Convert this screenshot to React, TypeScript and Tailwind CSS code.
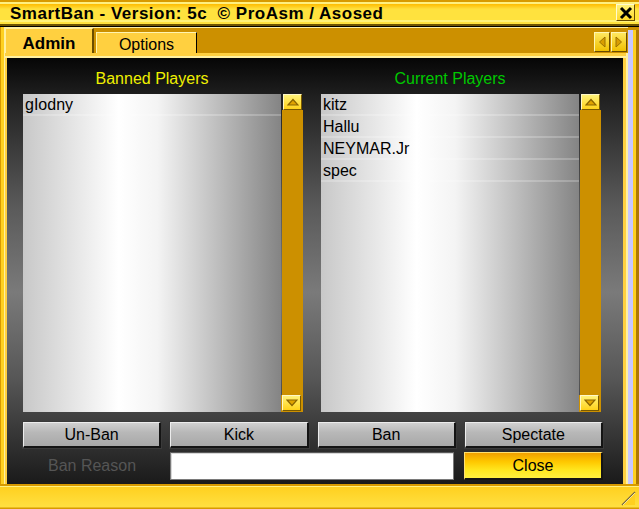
import React from 'react';

const FONT = "font-['Liberation_Sans',Arial,sans-serif]";

function ScrollButton({ dir }: { dir: 'up' | 'down' }) {
  return (
    <div className="h-[16px] w-[19px] flex items-center justify-center bg-[linear-gradient(to_bottom,#fff27a,#ffd21a)] border-t border-l border-[#fff8c8] border-r border-b border-r-[#7a5a00] border-b-[#7a5a00]">
      <svg width="12" height="8" viewBox="0 0 12 8">
        {dir === 'up' ? (
          <polygon points="1,7 6,1.5 11,7" fill="#e0a400" stroke="#8a6400" strokeWidth="1.2" />
        ) : (
          <polygon points="1,1 6,6.5 11,1" fill="#e0a400" stroke="#8a6400" strokeWidth="1.2" />
        )}
      </svg>
    </div>
  );
}

function PlayerList({ title, color, items }: { title: string; color: string; items: string[] }) {
  return (
    <div className="w-[280px] flex flex-col">
      <div className={`h-[20px] pt-[2px] w-[258px] flex items-center justify-center text-[16px] ${color}`}>{title}</div>
      <div className="mt-[6px] h-[318px] flex">
        <div className="w-[258px] bg-[linear-gradient(to_right,#c8c8c8_0%,#ffffff_37%,#f4f4f4_52%,#b8b8b8_78%,#848484_100%)]">
          {items.map((p) => (
            <div
              key={p}
              className="h-[22px] pl-[2px] pt-[2px] flex items-center text-[16px] text-black border-b-2 border-[#ffffff38]"
            >
              {p}
            </div>
          ))}
        </div>
        <div className="w-[22px] flex flex-col">
          <div className="h-[16px] pl-[2px]">
            <ScrollButton dir="up" />
          </div>
          <div className="flex-1 ml-[1px] bg-[#cc9000]" />
          <div className="h-[17px] pl-[1px] bg-[#cc9000]">
            <ScrollButton dir="down" />
          </div>
        </div>
      </div>
    </div>
  );
}

function GrayButton({ label }: { label: string }) {
  return (
    <button className="h-[26px] pt-[1px] flex items-center justify-center text-[16px] text-black bg-[linear-gradient(to_bottom,#d0d0d0,#b8b8b8_40%,#a8a8a8)] border-t border-l border-[#ececec] border-r-2 border-b-2 border-r-[#141414] border-b-[#141414] shadow-[0_0_0_1px_#3a3a3a]">
      {label}
    </button>
  );
}

function ArrowButton({ dir }: { dir: 'left' | 'right' }) {
  return (
    <div className="w-[16px] h-[20px] flex items-center justify-center bg-[linear-gradient(to_bottom,#ffe860,#f0c000)] border-t border-l border-[#fff6b0] border-r border-b border-r-[#6a4c00] border-b-[#6a4c00]">
      <svg width="8" height="12" viewBox="0 0 8 12">
        {dir === 'left' ? (
          <polygon points="7,1 1.5,6 7,11" fill="#d89e00" stroke="#9a7000" strokeWidth="1" />
        ) : (
          <polygon points="1,1 6.5,6 1,11" fill="#d89e00" stroke="#9a7000" strokeWidth="1" />
        )}
      </svg>
    </div>
  );
}

export default function App() {
  return (
    <div className={`w-[639px] h-[509px] flex flex-col overflow-hidden bg-[#ffd020] ${FONT}`}>
      {/* Title bar */}
      <div className="h-[27px] shrink-0 flex items-start bg-[linear-gradient(to_bottom,#d89a00_0px,#d89a00_2px,#fff080_2px,#fff080_4px,#ffbc00_4px,#ffd830_8px,#ffe23e_9px,#ffe23e_20px,#fff27a_20px,#fff27a_22px,#ffe23e_22px,#ffe23e_24px,#6e5400_24px,#6e5400_26px,#000_26px)]">
        <div className="pl-[10px] pt-[3px] h-[24px] flex items-center text-[17px] font-bold tracking-[0.5px] text-black whitespace-pre">
          SmartBan - Version: 5c  © ProAsm / Asosed
        </div>
        <div className="ml-auto mr-[4px] mt-[4px] w-[19px] h-[17px] flex items-center justify-center bg-[linear-gradient(to_bottom,#fff27a,#ffd828)] border-t border-l border-[#fffbd0] border-r border-b border-r-[#6a4c00] border-b-[#6a4c00]">
          <svg width="14" height="14" viewBox="0 0 14 14">
            <path d="M2 2 L12 12 M12 2 L2 12" stroke="#000" strokeWidth="3" />
          </svg>
        </div>
      </div>

      {/* Body */}
      <div className="h-[457px] shrink-0 flex">
        <div className="w-[5px] bg-[linear-gradient(to_right,#d89a00_0px,#d89a00_1px,#ffd020_1px,#ffd020_4px,#fff0a0_4px)]" />

        <div className="w-[623px] flex flex-col">
          {/* Tabs */}
          <div className="h-[26px] flex bg-[#cc9000] shadow-[inset_0_1px_0_#fff0a0]">
            <div className="mt-[1px] w-[89px] flex items-center justify-center pt-[5px] text-[17px] font-bold text-black bg-[#ffd040] border-l border-t border-[#fff0a0] border-r-2 border-r-[#6a4c00]">
              Admin
            </div>
            <div className="ml-[2px] mt-[5px] w-[101px] flex items-center justify-center pt-[3px] text-[16px] text-black bg-[#ffd040] border-l border-t border-[#fff4b0] border-r border-r-[#000]">
              Options
            </div>
            <div className="ml-auto mr-[1px] mt-[5px] flex gap-[1px]">
              <ArrowButton dir="left" />
              <ArrowButton dir="right" />
            </div>
          </div>

          {/* Panel */}
          <div className="flex-1 flex flex-col bg-[#ffd040] pt-[3px] pl-[2px] pr-[5px] shadow-[inset_-2px_0_0_#fff0a0]">
            <div className="h-[2px] -ml-[2px] -mr-[5px] bg-[#fff0a0]" />
            <div className="flex-1 flex flex-col pl-[16px] pt-[10px] bg-[linear-gradient(to_bottom,#060606_0%,#222222_10%,#5a5a5a_35%,#7a7a7a_55%,#575757_75%,#1a1a1a_100%)]">
              <div className="flex gap-[18px]">
                <PlayerList title="Banned Players" color="text-[#f0f000]" items={['gIodny']} />
                <PlayerList
                  title="Current Players"
                  color="text-[#00c800]"
                  items={['kitz', 'Hallu', 'NEYMAR.Jr', 'spec']}
                />
              </div>

              <div className="mt-[10px] w-[580px] grid grid-cols-4 gap-[9px]">
                <GrayButton label="Un-Ban" />
                <GrayButton label="Kick" />
                <GrayButton label="Ban" />
                <GrayButton label="Spectate" />
              </div>

              <div className="mt-[4px] w-[580px] h-[28px] flex items-center">
                <div className="w-[138px] text-center text-[16px] text-[#555555]">Ban Reason</div>
                <div className="ml-[9px] w-[284px] h-[28px] bg-white border border-[#7a7a7a] border-t-[#5a5a5a] shadow-[inset_1px_1px_0_#d8d8d8]" />
                <button className="ml-auto w-[139px] h-[28px] pt-[1px] flex items-center justify-center text-[16px] text-black bg-[linear-gradient(to_bottom,#f0a000,#ffc800_35%,#ffe820_70%,#fff040)] border-t border-l border-[#ffe070] border-r-2 border-b-2 border-r-[#141414] border-b-[#141414]">
                  Close
                </button>
              </div>
            </div>
          </div>
        </div>

        <div className="w-[11px] flex flex-col">
          <div className="h-[3px] bg-[#cc9000]" />
          <div className="flex-1 bg-[linear-gradient(to_right,#c8c8ff_0px,#c8c8ff_5px,#ffd020_5px,#ffd020_8px,#b07800_8px)]" />
        </div>
      </div>

      {/* Status bar */}
      <div className="h-[25px] shrink-0 flex items-end justify-end bg-[linear-gradient(to_bottom,#d89a00_0px,#d89a00_2px,#fff080_2px,#fff080_3px,#ffd020_3px,#ffe040_23px,#d89a00_24px)]">
        <svg width="18" height="18" viewBox="0 0 18 18" className="mr-[2px] mb-[2px]">
          <polygon points="16,3 16,16 3,16" fill="#ffd020" />
          <path d="M16 3 L3 16" stroke="#7a6a40" strokeWidth="1.5" />
          <path d="M16 4 L4 16" stroke="#fff6b0" strokeWidth="0.8" />
        </svg>
      </div>
    </div>
  );
}
